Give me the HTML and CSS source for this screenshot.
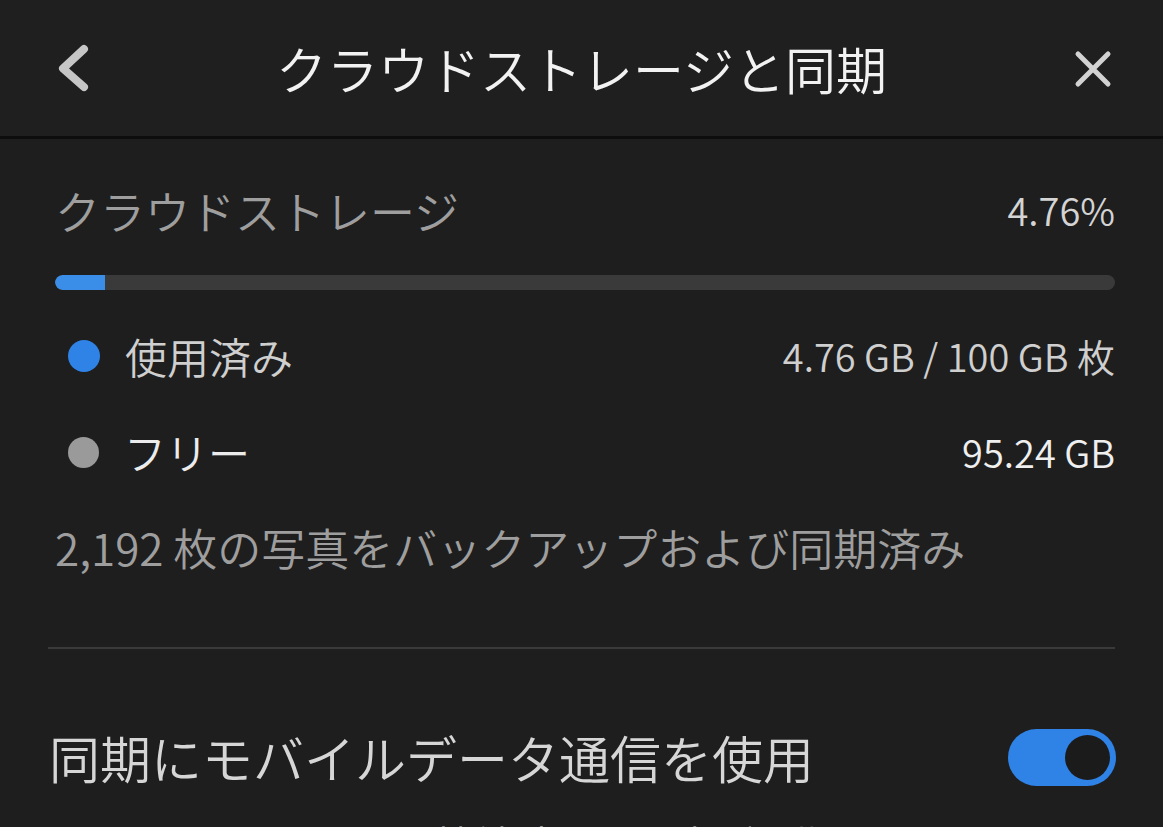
FILE: index.html
```html
<!DOCTYPE html>
<html lang="ja">
<head>
<meta charset="utf-8">
<title>クラウドストレージと同期</title>
<link rel="stylesheet" href="styles.css">
</head>
<body>
<div class="screen">
  <header class="topbar">
    <div class="nav-left">
      <svg class="icon-back" width="40" height="60" viewBox="0 0 40 60" aria-hidden="true">
        <polyline points="28,10 7,29.5 28,48" fill="none" stroke="#c6c6c6" stroke-width="8" stroke-linecap="round" stroke-linejoin="round"/>
      </svg>
    </div>
    <h1 class="title">クラウドストレージと同期</h1>
    <div class="nav-right">
      <svg class="icon-close" width="40" height="40" viewBox="0 0 40 40" aria-hidden="true">
        <path d="M5 5 L35 35 M35 5 L5 35" fill="none" stroke="#d2d2d2" stroke-width="5" stroke-linecap="round"/>
      </svg>
    </div>
  </header>

  <main class="content">
    <section class="storage">
      <div class="storage-head">
        <span class="storage-label">クラウドストレージ</span>
        <span class="storage-pct">4.76%</span>
      </div>
      <div class="bar"><div class="bar-fill" style="width:4.76%"></div></div>
      <div class="legend-row">
        <span class="dot dot-used"></span>
        <span class="legend-label">使用済み</span>
        <span class="legend-value">4.76 GB / 100 GB 枚</span>
      </div>
      <div class="legend-row">
        <span class="dot dot-free"></span>
        <span class="legend-label legend-label-bright">フリー</span>
        <span class="legend-value legend-value-bright">95.24 GB</span>
      </div>
      <p class="stats">2,192 枚の写真をバックアップおよび同期済み</p>
    </section>

    <hr class="divider">

    <section class="setting">
      <div class="setting-row">
        <span class="setting-label">同期にモバイルデータ通信を使用</span>
        <span class="toggle on"><span class="knob"></span></span>
      </div>
      <p class="setting-desc">オフにすると、Wi-Fi 接続時のみ写真が同期されます。</p>
    </section>
  </main>
</div>
</body>
</html>
```
FILE: styles.css
```css
html, body {
  margin: 0;
  padding: 0;
  background: #1e1e1e;
}

body {
  font-family: "Noto Sans CJK JP", "Noto Sans", sans-serif;
  font-weight: 350;
  color: #d2d2d2;
}

.screen {
  width: 1163px;
  height: 827px;
  overflow: hidden;
  background: #1e1e1e;
}

.topbar {
  height: 136px;
  border-bottom: 3px solid #0d0d0d;
  background: #1f1f1f;
  display: grid;
  grid-template-columns: 1fr auto 1fr;
  align-items: center;
}

.nav-left {
  padding-left: 56px;
  display: flex;
  align-items: center;
}

.nav-right {
  display: flex;
  justify-content: flex-end;
  align-items: center;
  padding-right: 50px;
}

.icon-back { display: block; margin-top: 2px; }
.icon-close { display: block; margin-top: 2px; }

.title {
  margin: 0;
  font-size: 51px;
  font-weight: 350;
  line-height: 1;
  color: #f2f2f2;
  letter-spacing: 0;
}

.content {
  padding: 0 48px;
}

.storage {
  padding-left: 7px;
}

.storage-head {
  margin-top: 41px;
  height: 60px;
  display: flex;
  justify-content: space-between;
  align-items: center;
}

.storage-label {
  font-size: 45px;
  color: #9e9e9e;
  line-height: 1;
}

.storage-pct {
  font-size: 38px;
  color: #d4d4d4;
  line-height: 1;
}

.bar {
  margin-top: 35px;
  height: 15px;
  border-radius: 8px;
  background: #3a3a3a;
  overflow: hidden;
}

.bar-fill {
  height: 100%;
  background: #3b8ee8;
  border-radius: 8px 0 0 8px;
}

.bar + .legend-row { margin-top: 18px; }

.legend-row {
  height: 96px;
  display: flex;
  align-items: center;
}

.dot {
  width: 32px;
  height: 32px;
  border-radius: 50%;
  margin-left: 13px;
  margin-right: 25px;
  flex: none;
}

.dot-used { background: #2f82e6; }
.dot-free { background: #9a9a9a; width: 31px; height: 31px; }

.legend-label {
  font-size: 42px;
  color: #cfcfcf;
  line-height: 1;
}

.legend-label-bright { color: #ececec; }

.legend-value {
  margin-left: auto;
  font-size: 38px;
  color: #cfcfcf;
  line-height: 1;
}

.legend-value-bright { color: #efefef; }

.stats {
  margin: 17px 0 0;
  height: 60px;
  display: flex;
  align-items: center;
  font-size: 44px;
  color: #9e9e9e;
  line-height: 1;
  white-space: nowrap;
}

.divider {
  margin: 70px 0 0;
  border: 0;
  height: 2px;
  background: #3a3a3a;
}

.setting-row {
  margin-top: 68px;
  height: 80px;
  display: flex;
  justify-content: space-between;
  align-items: center;
}

.setting-label {
  font-size: 51px;
  color: #d6d6d6;
  line-height: 1;
  margin-left: 1px;
}

.toggle {
  width: 108px;
  height: 57px;
  border-radius: 29px;
  background: #2f82e6;
  display: flex;
  align-items: center;
  justify-content: flex-end;
  padding-right: 6px;
  box-sizing: border-box;
  margin-right: -1px;
  flex: none;
}

.knob {
  width: 45px;
  height: 45px;
  border-radius: 50%;
  background: #1b1b1b;
}

.setting-desc {
  margin: 22px 0 0 7px;
  font-size: 40px;
  color: #9e9e9e;
  line-height: 1.2;
  white-space: nowrap;
}
```
